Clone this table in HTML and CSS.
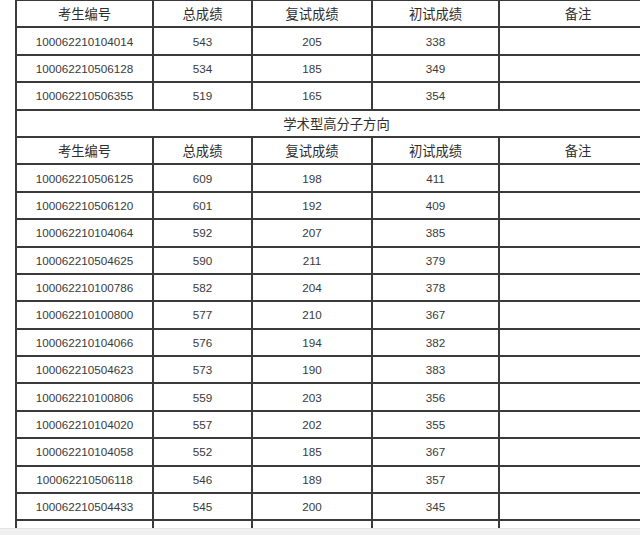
FILE: index.html
```html
<!DOCTYPE html>
<html>
<head>
<meta charset="utf-8">
<link rel="stylesheet" href="styles.css">
</head>
<body>
<div class="viewport">
<table class="scores">
<colgroup>
<col class="c1"><col class="c2"><col class="c3"><col class="c4"><col class="c5">
</colgroup>
<tbody>
<tr class="head"><td>考生编号</td><td>总成绩</td><td>复试成绩</td><td>初试成绩</td><td>备注</td></tr>
<tr><td>100062210104014</td><td>543</td><td>205</td><td>338</td><td></td></tr>
<tr><td>100062210506128</td><td>534</td><td>185</td><td>349</td><td></td></tr>
<tr><td>100062210506355</td><td>519</td><td>165</td><td>354</td><td></td></tr>
<tr class="head"><td colspan="5">学术型高分子方向</td></tr>
<tr class="head"><td>考生编号</td><td>总成绩</td><td>复试成绩</td><td>初试成绩</td><td>备注</td></tr>
<tr><td>100062210506125</td><td>609</td><td>198</td><td>411</td><td></td></tr>
<tr><td>100062210506120</td><td>601</td><td>192</td><td>409</td><td></td></tr>
<tr><td>100062210104064</td><td>592</td><td>207</td><td>385</td><td></td></tr>
<tr><td>100062210504625</td><td>590</td><td>211</td><td>379</td><td></td></tr>
<tr><td>100062210100786</td><td>582</td><td>204</td><td>378</td><td></td></tr>
<tr><td>100062210100800</td><td>577</td><td>210</td><td>367</td><td></td></tr>
<tr><td>100062210104066</td><td>576</td><td>194</td><td>382</td><td></td></tr>
<tr><td>100062210504623</td><td>573</td><td>190</td><td>383</td><td></td></tr>
<tr><td>100062210100806</td><td>559</td><td>203</td><td>356</td><td></td></tr>
<tr><td>100062210104020</td><td>557</td><td>202</td><td>355</td><td></td></tr>
<tr><td>100062210104058</td><td>552</td><td>185</td><td>367</td><td></td></tr>
<tr><td>100062210506118</td><td>546</td><td>189</td><td>357</td><td></td></tr>
<tr><td>100062210504433</td><td>545</td><td>200</td><td>345</td><td></td></tr>
<tr><td></td><td></td><td></td><td></td><td></td></tr>
</tbody>
</table>
</div>
<div class="bottom-bar"></div>
</body>
</html>
```

FILE: styles.css
```css
html, body {
  margin: 0;
  padding: 0;
  background: #ffffff;
}
.viewport {
  height: 528px;
  overflow: hidden;
  padding-left: 15px;
  box-sizing: border-box;
}
.scores {
  border-collapse: collapse;
  table-layout: fixed;
  width: 641px;
  margin-top: -1px;
}
.c1 { width: 137px; }
.c2 { width: 99px; }
.c3 { width: 120px; }
.c4 { width: 127px; }
.c5 { width: 158px; }
.scores td {
  border: 2px solid #3a3a3a;
  height: 27.4px;
  padding: 1px 0 0;
  box-sizing: border-box;
  text-align: center;
  vertical-align: middle;
  color: #3a3a3a;
  font-family: "Liberation Sans", Arial, sans-serif;
  font-size: 11.7px;
  line-height: 14px;
  white-space: nowrap;
  overflow: hidden;
}
.scores tr.head td {
  font-family: "Noto Sans CJK SC", "Noto Sans", sans-serif;
  font-size: 13.3px;
  color: #2e2e2e;
}
.bottom-bar {
  height: 7px;
  background: #f0f0f0;
  border-top: 1px solid #e4e4e4;
}
```
